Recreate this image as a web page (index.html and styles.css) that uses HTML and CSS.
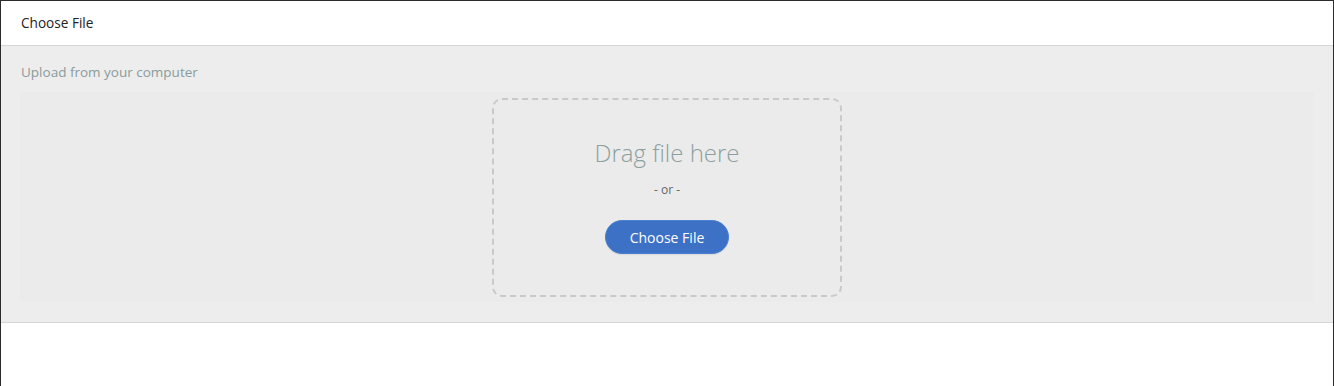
FILE: index.html
```html
<!DOCTYPE html>
<html lang="en">
<head>
  <meta charset="UTF-8" />
  <title>Choose File</title>
  <link rel="stylesheet" href="styles.css">
</head>
<body>
  <div class="modal">
    <div class="modal-header">Choose File</div>
    <div class="modal-body">
      <div class="source-label">Upload from your computer</div>
      <div class="upload-area">
        <div class="dropzone">
          <div class="drop-title">Drag file here</div>
          <div class="drop-or">- or -</div>
          <button class="choose-btn">Choose File</button>
        </div>
      </div>
    </div>
  </div>
</body>
</html>
```

FILE: styles.css
```css
html, body {
  margin: 0;
  padding: 0;
  background: #fff;
}
body {
  font-family: 'Open Sans', 'Liberation Sans', sans-serif;
}
.modal {
  height: 386px;
  box-sizing: border-box;
  border: 1px solid #2b2b2b;
  border-bottom: none;
  background: #fff;
}
.modal-header {
  height: 45px;
  box-sizing: border-box;
  padding: 12px 20px 0;
  font-size: 13.6px;
  line-height: 20px;
  color: #222;
  border-bottom: 1px solid #d6d6d6;
}
.modal-body {
  background: #ededed;
  padding: 0 19px 20px 19px;
  border-bottom: 1px solid #d6d6d6;
}
.source-label {
  height: 46px;
  box-sizing: border-box;
  padding: 16px 0 0 1px;
  font-size: 13.5px;
  line-height: 20px;
  color: #8a9b9b;
}
.upload-area {
  background: #ebebeb;
  height: 210px;
  padding-top: 6px;
  box-sizing: border-box;
  display: flex;
  justify-content: center;
  align-items: flex-start;
}
.dropzone {
  width: 350px;
  height: 199px;
  box-sizing: border-box;
  border: 2px dashed #c9c9c9;
  border-radius: 10px;
  display: flex;
  flex-direction: column;
  align-items: center;
  padding-top: 37px;
}
.drop-title {
  font-size: 24px;
  font-weight: 300;
  line-height: 32px;
  color: #8d9f9f;
}
.drop-or {
  margin-top: 13px;
  font-size: 12px;
  line-height: 16px;
  color: #666;
}
.choose-btn {
  margin-top: 22px;
  width: 124px;
  height: 34px;
  border: 1px solid #4c80d0;
  border-radius: 17px;
  background: #3c71c5;
  color: #fff;
  font-family: 'Open Sans', 'Liberation Sans', sans-serif;
  font-size: 14px;
  padding: 0;
  cursor: pointer;
  box-shadow: 0 1px 1px rgba(0, 0, 0, 0.08);
}
```
